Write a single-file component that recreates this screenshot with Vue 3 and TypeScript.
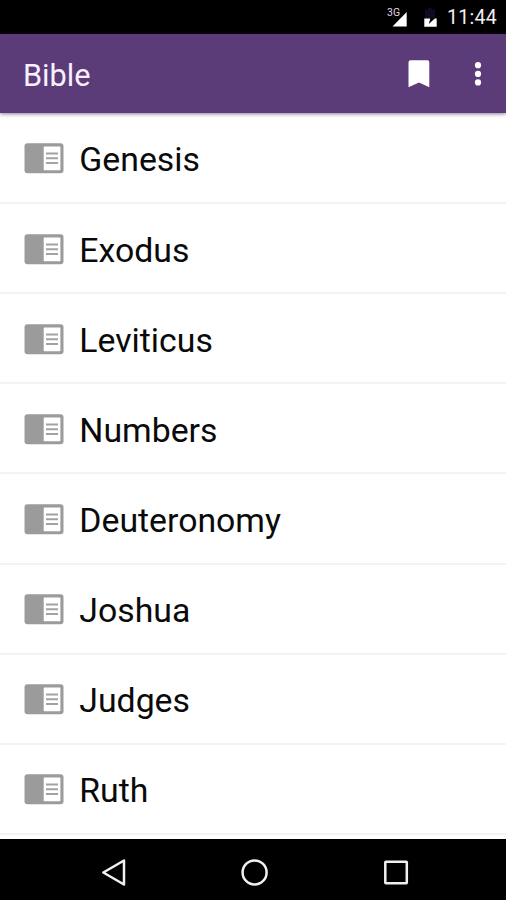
<script setup lang="ts">
const books: string[] = [
  'Genesis',
  'Exodus',
  'Leviticus',
  'Numbers',
  'Deuteronomy',
  'Joshua',
  'Judges',
  'Ruth',
]
</script>

<template>
  <div class="screen">
    <div class="status-bar">
      <svg class="status-icons" width="56" height="34" viewBox="0 0 56 34">
        <text class="network" x="1" y="15.8" textLength="13" lengthAdjust="spacingAndGlyphs">3G</text>
        <path d="M20.7 12V26.5H6.5z" fill="#fff" />
        <path d="M39 9.5h3V8h4v1.5h3V18H39z" fill="#130a22" />
        <path d="M38.3 18.5h6l-1.5 5.5 6-5.5h1.9v8.2H38.3z" fill="#fff" />
      </svg>
      <span class="clock">11:44</span>
    </div>
    <header class="app-bar">
      <h1 class="title">Bible</h1>
      <svg class="bookmark" width="22" height="28" viewBox="0 0 22 28">
        <path d="M2.5 .3h17Q21.3.3 21.3 2.5V27.2L11 22.4.5 27.2V2.5Q.5.3 2.5.3z" fill="#fff" />
      </svg>
      <svg class="more" width="8" height="26" viewBox="0 0 8 26">
        <circle cx="4" cy="4.2" r="3.1" fill="#fff" />
        <circle cx="4" cy="12.9" r="3.1" fill="#fff" />
        <circle cx="4" cy="21.4" r="3.1" fill="#fff" />
      </svg>
    </header>
    <main class="list">
      <div v-for="book in books" :key="book" class="row">
        <svg class="book-icon" width="40" height="31" viewBox="0 0 40 31">
          <rect x=".5" y=".3" width="39" height="30" rx="3" fill="#9b9b9b" />
          <rect x="19.7" y="3.4" width="16.7" height="23.8" rx=".6" fill="#fff" />
          <path d="M22 10.6h12M22 15.3h12M22 20h12" stroke="#a2a2a2" stroke-width="2" />
        </svg>
        <span class="name">{{ book }}</span>
      </div>
    </main>
    <nav class="nav-bar">
      <svg width="506" height="61" viewBox="0 0 506 61" fill="none" stroke="#f0f0f0" stroke-width="2.5">
        <path d="M124 21.5V45.5L103.3 33.5z" stroke-linejoin="round" />
        <circle cx="254.6" cy="33.4" r="12" />
        <rect x="385.3" y="22.7" width="21.5" height="21.6" rx=".5" />
      </svg>
    </nav>
  </div>
</template>

<style>
body {
  margin: 0;
}
</style>

<style scoped>
.screen {
  width: 506px;
  height: 900px;
  display: flex;
  flex-direction: column;
  overflow: hidden;
  background: #fff;
  font-family: Roboto, sans-serif;
}

.status-bar {
  height: 34px;
  flex: none;
  display: flex;
  justify-content: flex-end;
  background: #000;
}

.network {
  font-size: 11.5px;
  fill: #e0d8ea;
}

.clock {
  width: 50px;
  margin-left: 5px;
  margin-right: 9px;
  font-size: 19.5px;
  font-weight: 400;
  line-height: 36px;
  letter-spacing: 0.3px;
  color: #f0f0f0;
  white-space: nowrap;
}

.app-bar {
  position: relative;
  height: 79px;
  flex: none;
  display: flex;
  align-items: center;
  padding: 0 24px 0 23px;
  box-sizing: border-box;
  background: #5b3b78;
  box-shadow: 0 1px 4px rgba(60, 35, 85, 0.6);
}

.title {
  flex: 1;
  margin: 4px 0 0;
  font-size: 30.7px;
  font-weight: 400;
  line-height: 40px;
  color: #f8efff;
}

.bookmark {
  margin-right: 44px;
}

.list {
  height: 726px;
  flex: none;
}

.row {
  height: 90.14px;
  box-sizing: border-box;
  display: flex;
  align-items: center;
  padding: 2px 0 0 24px;
  border-bottom: 2px solid #f3f3f3;
}

.row:first-child {
  height: 91px;
}

.book-icon {
  flex: none;
}

.name {
  margin-left: 15.3px;
  padding-top: 3px;
  font-size: 33.8px;
  line-height: 40px;
  color: #0a0a0a;
}

.nav-bar {
  height: 61px;
  flex: none;
  background: #000;
}
</style>
